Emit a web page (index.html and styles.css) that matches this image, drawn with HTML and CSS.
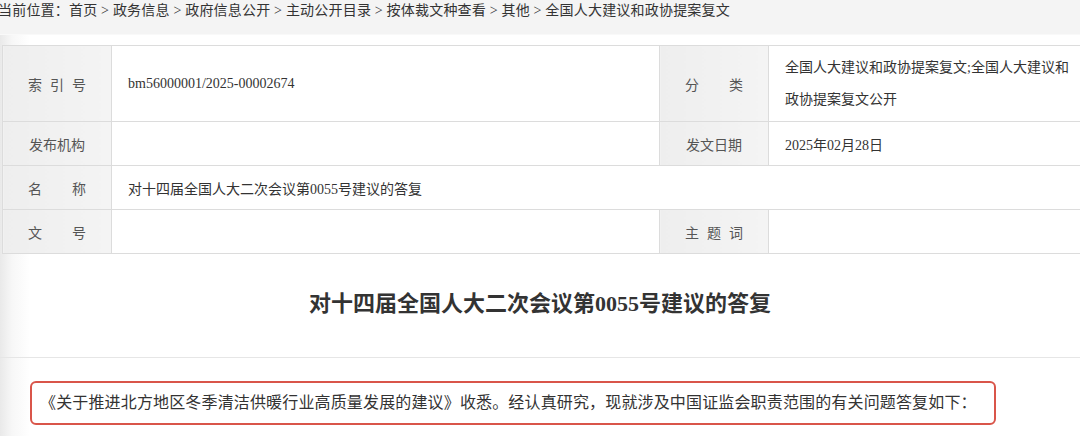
FILE: index.html
```html
<!DOCTYPE html>
<html lang="zh-CN">
<head>
<meta charset="utf-8">
<title>对十四届全国人大二次会议第0055号建议的答复</title>
<link rel="stylesheet" href="styles.css">
</head>
<body>
<div class="crumb">当前位置：首页 &gt; 政务信息 &gt; 政府信息公开 &gt; 主动公开目录 &gt; 按体裁文种查看 &gt; 其他 &gt; 全国人大建议和政协提案复文</div>
<div class="page">
  <table class="meta">
    <colgroup>
      <col class="c-label"><col class="c-value"><col class="c-label"><col class="c-rest">
    </colgroup>
    <tr class="r-tall">
      <th><span class="lbl3">索引号</span></th>
      <td>bm56000001/2025-00002674</td>
      <th><span class="lbl2">分类</span></th>
      <td class="wrap">全国人大建议和政协提案复文;全国人大建议和政协提案复文公开</td>
    </tr>
    <tr>
      <th>发布机构</th>
      <td></td>
      <th>发文日期</th>
      <td>2025年02月28日</td>
    </tr>
    <tr>
      <th><span class="lbl2">名称</span></th>
      <td colspan="3">对十四届全国人大二次会议第0055号建议的答复</td>
    </tr>
    <tr>
      <th><span class="lbl2">文号</span></th>
      <td></td>
      <th><span class="lbl3">主题词</span></th>
      <td></td>
    </tr>
  </table>
  <h1 class="title">对十四届全国人大二次会议第0055号建议的答复</h1>
  <div class="body">
    <p class="lead">《关于推进北方地区冬季清洁供暖行业高质量发展的建议》收悉。经认真研究，现就涉及中国证监会职责范围的有关问题答复如下：</p>
  </div>
</div>
</body>
</html>
```

FILE: styles.css
```css
html, body {
  margin: 0;
  padding: 0;
  overflow: hidden;
}
body {
  width: 1080px;
  height: 436px;
  font-family: "Liberation Serif", "Noto Sans CJK SC", serif;
  color: #333;
  background: linear-gradient(to right, #e9e9e9 0, #f7f7f7 12px, #ffffff 30px);
}
.crumb {
  height: 34px;
  line-height: 22px;
  font-size: 14px;
  letter-spacing: 0.2px;
  color: #333;
  background: #f4f4f4;
  white-space: nowrap;
  margin-left: -2px;
  border-bottom: 1px solid #f9f9f9;
}
.page {
  padding-top: 10px;
}
.meta {
  border-collapse: collapse;
  margin-left: 2px;
  width: 1090px;
  table-layout: fixed;
  font-size: 14px;
}
.c-label { width: 109px; }
.c-value { width: 548px; }
.c-rest { width: auto; }
.meta th, .meta td {
  border: 1px solid #dcdcdc;
  height: 43px;
  padding: 0;
}
.meta th {
  background: linear-gradient(to right, #eeeeee, #f4f4f4);
  color: #555;
  font-weight: normal;
  text-align: center;
}
.meta td {
  background: #fff;
  padding-left: 16px;
  color: #333;
  text-align: left;
}
.meta .r-tall th, .meta .r-tall td {
  height: 75px;
}
.meta td.wrap {
  line-height: 32px;
  padding-right: 18px;
}
.lbl3 {
  letter-spacing: 8px;
  margin-right: -8px;
}
.lbl2 {
  letter-spacing: 30px;
  margin-right: -30px;
}
.title {
  margin: 0;
  height: 103px;
  line-height: 100px;
  text-align: center;
  font-size: 22px;
  font-weight: bold;
  color: #333;
  border-bottom: 1px solid #e6e6e6;
}
.body {
  padding: 23px 0 0 30px;
}
.lead {
  margin: 0;
  width: 954px;
  height: 40px;
  line-height: 40px;
  padding-left: 8px;
  font-size: 16px;
  letter-spacing: 0.15px;
  color: #333;
  border: 2px solid #d9554a;
  border-radius: 6px;
  white-space: nowrap;
}
```
